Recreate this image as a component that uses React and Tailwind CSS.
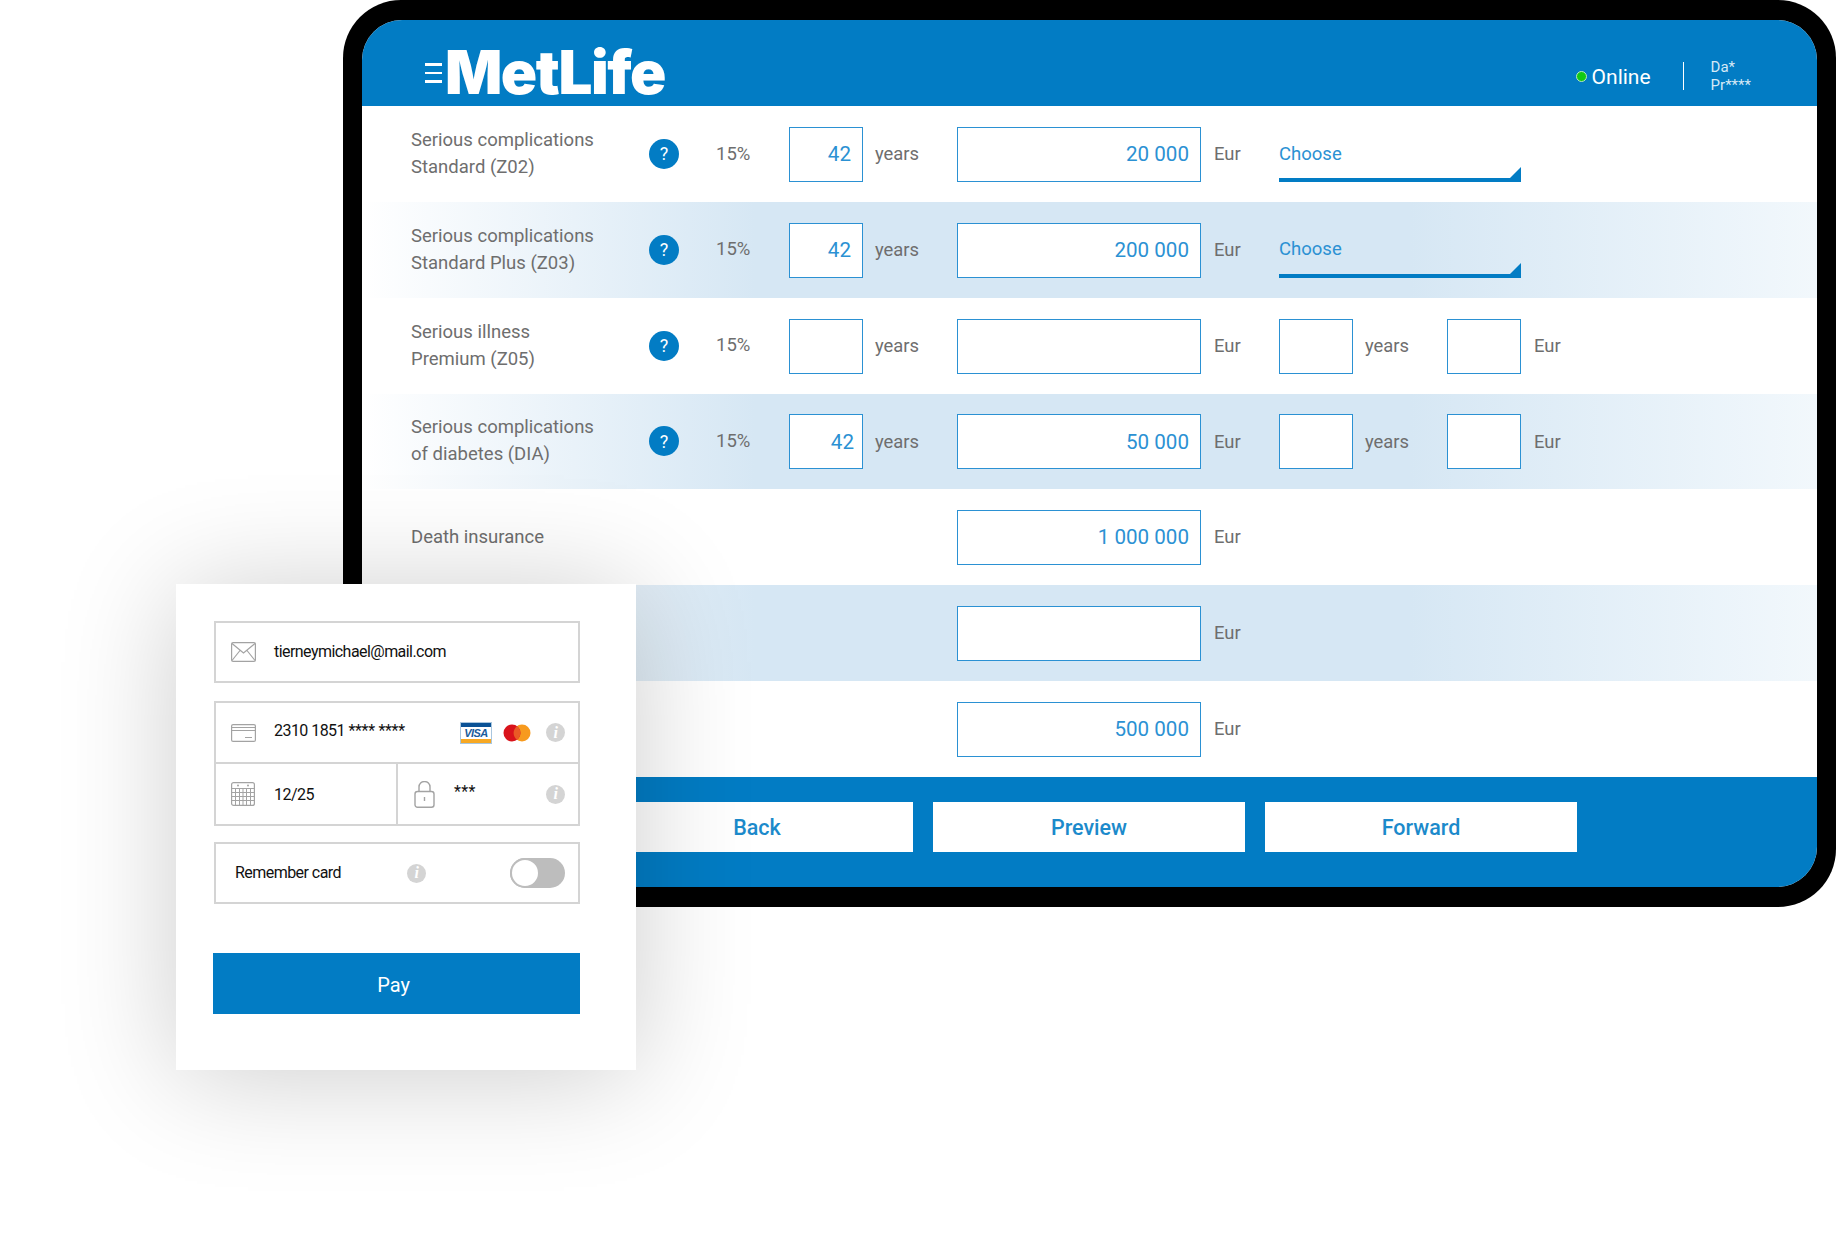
import React from 'react';

const rows = [
  { label: ['Serious complications', 'Standard (Z02)'], pct: true, years: '42', amount: '20 000', choose: true },
  { label: ['Serious complications', 'Standard Plus (Z03)'], pct: true, years: '42', amount: '200 000', choose: true, tint: true },
  { label: ['Serious illness', 'Premium (Z05)'], pct: true, years: '', amount: '', extra: true },
  { label: ['Serious complications', 'of diabetes (DIA)'], pct: true, years: '42', shift: true, amount: '50 000', extra: true, tint: true },
  { label: ['Death insurance'], amount: '1 000 000' },
  { label: [], amount: '', tint: true },
  { label: [], amount: '500 000' },
];

const Box = ({ className, children }) => (
  <div className={`h-[55px] mt-[1px] border-[1.5px] border-[#2b91d3] bg-white flex items-center justify-end pr-[11px] text-[20.6px] text-[#2b91d3] ${className}`}>
    {children}
  </div>
);

const Unit = ({ className, children }) => <span className={`text-[18.4px] text-[#6e6e6e] ${className}`}>{children}</span>;

const Row = ({ row }) => (
  <div className={`h-[95.85px] flex items-center pl-[49px] ${row.tint ? 'bg-[linear-gradient(90deg,#ffffff_0%,#d6e7f4_27%,#d6e7f4_72%,#f2f8fc_100%)]' : 'bg-white'}`}>
    <div className="w-[238px] text-[18.5px] leading-[27px] text-[#6e6e6e]">
      {row.label.map((line) => (
        <div key={line}>{line}</div>
      ))}
    </div>
    <div className="w-[30px]">
      {row.pct && (
        <div className="w-[30px] h-[30px] rounded-full bg-[#027cc4] text-white text-[18px] flex items-center justify-center">?</div>
      )}
    </div>
    <div className="w-[110px] pl-[37px] mt-[1px] text-[18.5px] text-[#6e6e6e]">{row.pct && '15%'}</div>
    <div className="w-[168px] flex items-center">
      {row.pct && (
        <>
          <Box className="w-[74px]">
            <span className={row.shift ? 'translate-x-[3px]' : ''}>{row.years}</span>
          </Box>
          <Unit className="ml-[12px]">years</Unit>
        </>
      )}
    </div>
    <Box className="w-[244px]">{row.amount}</Box>
    <Unit className="ml-[13px] w-[65px]">Eur</Unit>
    {row.choose && (
      <div className="relative w-[242px] h-[55px] mt-[1px] flex items-center text-[18.5px] text-[#2b91d3]">
        <span>Choose</span>
        <div className="absolute left-0 right-0 bottom-0 h-[4px] bg-[#027cc4]" />
        <svg className="absolute right-0 bottom-0" width="15" height="15" viewBox="0 0 15 15">
          <path d="M0 15 L15 0 V15 Z" fill="#027cc4" />
        </svg>
      </div>
    )}
    {row.extra && (
      <div className="flex items-center">
        <Box className="w-[74px]" />
        <Unit className="ml-[12px] w-[82px]">years</Unit>
        <Box className="w-[74px]" />
        <Unit className="ml-[13px]">Eur</Unit>
      </div>
    )}
  </div>
);

const Info = ({ className }) => (
  <div className={`w-[19px] h-[19px] rounded-full bg-[#d4d4d4] text-white text-[16px] font-bold italic flex items-center justify-center font-['Liberation_Serif',serif] ${className}`}>
    i
  </div>
);

const MailIcon = () => (
  <svg width="25" height="20" viewBox="0 0 25 20" fill="none" stroke="#a3a3a3" strokeWidth="1.2">
    <rect x="0.6" y="0.6" width="23.8" height="18.8" rx="1.5" />
    <path d="M1 1.5 L12.5 11 L24 1.5 M1 18.5 L9 8.5 M24 18.5 L16 8.5" />
  </svg>
);

const CardIcon = () => (
  <svg width="25" height="18" viewBox="0 0 25 18" fill="none" stroke="#a3a3a3" strokeWidth="1.2">
    <rect x="0.6" y="0.6" width="23.8" height="16.8" rx="1.5" />
    <path d="M0.6 3.5 H24.4 M0.6 6.5 H24.4 M14 13.5 H21" />
  </svg>
);

const CalendarIcon = () => (
  <svg width="24" height="24" viewBox="0 0 24 24" fill="none" stroke="#a3a3a3" strokeWidth="1">
    <rect x="0.6" y="0.6" width="22.8" height="22.8" rx="2" strokeWidth="1.2" />
    <path d="M0.6 6.5 H23.4 M0.6 10.5 H23.4 M0.6 14.5 H23.4 M0.6 18.5 H23.4 M4.5 6.5 V23 M8.5 6.5 V23 M12 6.5 V23 M15.5 6.5 V23 M19.5 6.5 V23" />
    <circle cx="7" cy="3.5" r="1" fill="#a3a3a3" stroke="none" />
    <circle cx="17" cy="3.5" r="1" fill="#a3a3a3" stroke="none" />
  </svg>
);

const LockIcon = () => (
  <svg width="21" height="27" viewBox="0 0 21 27" fill="none" stroke="#a3a3a3" strokeWidth="1.4">
    <rect x="1" y="10.5" width="19" height="15.8" rx="2.5" />
    <path d="M5 10.5 V6 a5.5 5.5 0 0 1 11 0 V10.5 M10.5 16 V20" />
  </svg>
);

const VisaIcon = () => (
  <svg width="32" height="22" viewBox="0 0 32 22">
    <rect x="0.5" y="0.5" width="31" height="21" fill="#fff" stroke="#a9c6de" />
    <rect x="1" y="1" width="30" height="4" fill="#0a5296" />
    <rect x="1" y="17" width="30" height="4" fill="#f7a823" />
    <text x="16" y="14.8" textAnchor="middle" fontSize="11" fontWeight="700" fontStyle="italic" fill="#1a5c9c" fontFamily="Liberation Sans, sans-serif">VISA</text>
  </svg>
);

const MasterIcon = () => (
  <svg width="28" height="18" viewBox="0 0 28 18">
    <circle cx="19" cy="9" r="8.5" fill="#f79a1e" />
    <circle cx="9" cy="9" r="8.5" fill="#d9131b" />
    <path d="M14 2.2 a8.5 8.5 0 0 1 0 13.6 a8.5 8.5 0 0 1 0 -13.6 Z" fill="#ea5a25" />
  </svg>
);

const PayCard = () => (
  <div className="absolute left-[176px] top-[584px] w-[460px] h-[486px] bg-white pt-[37px] pl-[38px] pr-[56px] text-[16px] tracking-[-0.55px] text-[#111] shadow-[0_6px_110px_rgba(0,0,0,0.2)]">
    <div className="h-[62px] border-2 border-[#d4d4d4] flex items-center pl-[15px]">
      <MailIcon />
      <span className="ml-[18px]">tierneymichael@mail.com</span>
    </div>

    <div className="mt-[18px] h-[125px] border-2 border-[#d4d4d4] flex flex-col">
      <div className="h-[61px] flex items-center pl-[15px] pr-[13px] border-b-2 border-[#d4d4d4]">
        <CardIcon />
        <span className="ml-[18px] -mt-[4px]">2310 1851 <span className="tracking-[-0.3px]">**** ****</span></span>
        <div className="ml-auto flex items-center gap-[11px]">
          <VisaIcon />
          <MasterIcon />
          <Info className="ml-[4px]" />
        </div>
      </div>
      <div className="flex-1 flex">
        <div className="w-[182px] flex items-center pl-[15px] border-r-2 border-[#d4d4d4]">
          <CalendarIcon />
          <span className="ml-[19px] mt-[1px]">12/25</span>
        </div>
        <div className="flex-1 flex items-center pl-[16px] pr-[13px]">
          <LockIcon />
          <span className="ml-[19px] -mt-[5px] tracking-[0.3px]">***</span>
          <Info className="ml-auto" />
        </div>
      </div>
    </div>

    <div className="mt-[16px] h-[62px] border-2 border-[#d4d4d4] flex items-center pl-[19px] pr-[13px]">
      <span>Remember card</span>
      <Info className="ml-[66px]" />
      <div className="ml-auto w-[55px] h-[30px] rounded-full bg-[#bdbdbd] flex items-center">
        <div className="w-[30px] h-[30px] rounded-full bg-white border-2 border-[#bdbdbd]" />
      </div>
    </div>

    <div className="mt-[49px] -ml-[1px] h-[61px] bg-[#027cc4] text-white text-[20px] tracking-normal flex items-center justify-center pr-[6px] pt-[2px]">Pay</div>
  </div>
);

export default function App() {
  return (
    <div className="relative w-[1836px] h-[1251px] overflow-hidden bg-white font-['Roboto',sans-serif]">
      {/* tablet */}
      <div className="ml-[343px] w-[1493px] h-[907px] bg-black rounded-[58px] p-[19px] pt-[20px] pb-[20px]">
        <div className="h-full rounded-[40px] overflow-hidden bg-white flex flex-col">
          <header className="h-[86px] bg-[#027cc4] flex items-center pt-[16px] pl-[63px] pr-[66px] text-white">
            <div className="flex flex-col gap-[6px] w-[17px] mt-[4px]">
              <div className="h-[2.5px] bg-white" />
              <div className="h-[2.5px] bg-white" />
              <div className="h-[2.5px] bg-white" />
            </div>
            <span className="ml-[3px] mt-[2px] text-[60px] leading-none font-black tracking-[-1.5px] font-['Inter',sans-serif]">MetLife</span>
            <div className="ml-auto mt-[10px] flex items-center">
              <div className="w-[11px] h-[11px] rounded-full bg-[#12c912] border border-[#b9e8c0] mr-[5px]" />
              <span className="text-[21px] mt-[3px]">Online</span>
              <div className="ml-[32px] w-[1px] h-[28px] bg-white" />
              <div className="ml-[27px] text-[15px] leading-[18px] text-[#d5e9f6]">
                <div>Da*</div>
                <div>Pr****</div>
              </div>
            </div>
          </header>

          {rows.map((row, i) => (
            <Row key={i} row={row} />
          ))}

          <footer className="flex-1 bg-[#027cc4] flex items-start pt-[25px] pl-[239px] gap-[20px] text-[21.5px] font-medium text-[#1c8acb]">
            <div className="w-[312px] h-[50px] pt-[2px] bg-white flex items-center justify-center">Back</div>
            <div className="w-[312px] h-[50px] pt-[2px] bg-white flex items-center justify-center">Preview</div>
            <div className="w-[312px] h-[50px] pt-[2px] bg-white flex items-center justify-center">Forward</div>
          </footer>
        </div>
      </div>

      <PayCard />
    </div>
  );
}
